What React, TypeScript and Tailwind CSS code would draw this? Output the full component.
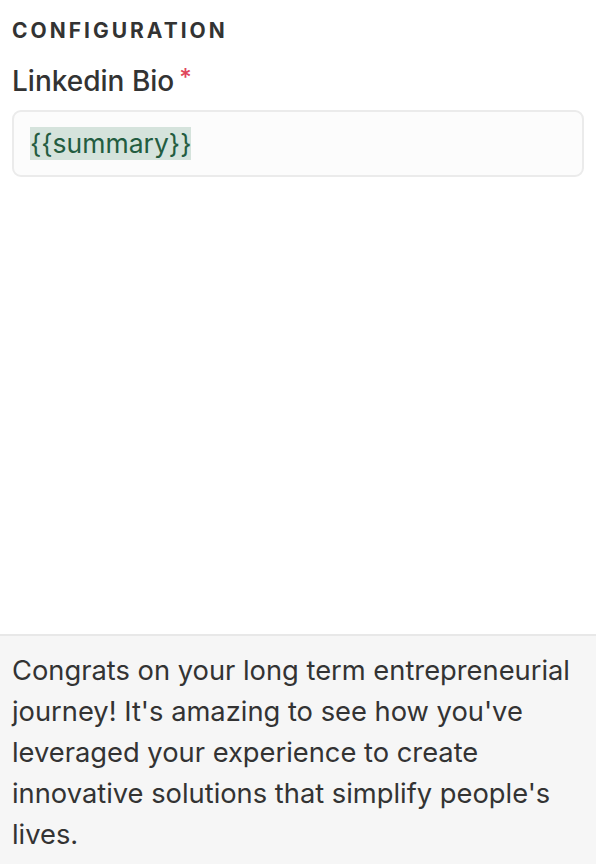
const App = () => {
    return (
        <div
            className="w-[596px] h-[864px] flex flex-col bg-white text-[#333333]"
            style={{ fontFamily: "Inter, 'Liberation Sans', sans-serif" }}
        >
            <div className="flex-1 px-3 pt-[18px]">
                <h3 className="text-[21px] leading-[26px] font-bold tracking-[3px] text-[#333333]">
                    CONFIGURATION
                </h3>

                <label className="mt-[20px] flex items-start text-[28px] leading-[34px] font-medium text-[#333333]">
                    Linkedin Bio
                    <span className="ml-[5px] text-[#e0455c] text-[24px] leading-[28px]">*</span>
                </label>

                <div className="mt-[12px] h-[67px] rounded-[9px] border-2 border-[#ebebeb] bg-[#fcfcfc] flex items-center px-[16px]">
                    <span className="bg-[#d5e3dc] text-[#235c40] text-[26.5px] leading-[33px]">
                        {"{{summary}}"}
                    </span>
                </div>
            </div>

            <div className="h-[230px] border-t-2 border-[#e8e8e8] bg-[#f6f6f6] px-3 pt-[14px]">
                <p className="text-[27.3px] leading-[41px] text-[#333333]">
                    Congrats on your long term entrepreneurial
                    <br />
                    journey! It's amazing to see how you've
                    <br />
                    leveraged your experience to create
                    <br />
                    innovative solutions that simplify people's
                    <br />
                    lives.
                </p>
            </div>
        </div>
    );
};

export default App;
